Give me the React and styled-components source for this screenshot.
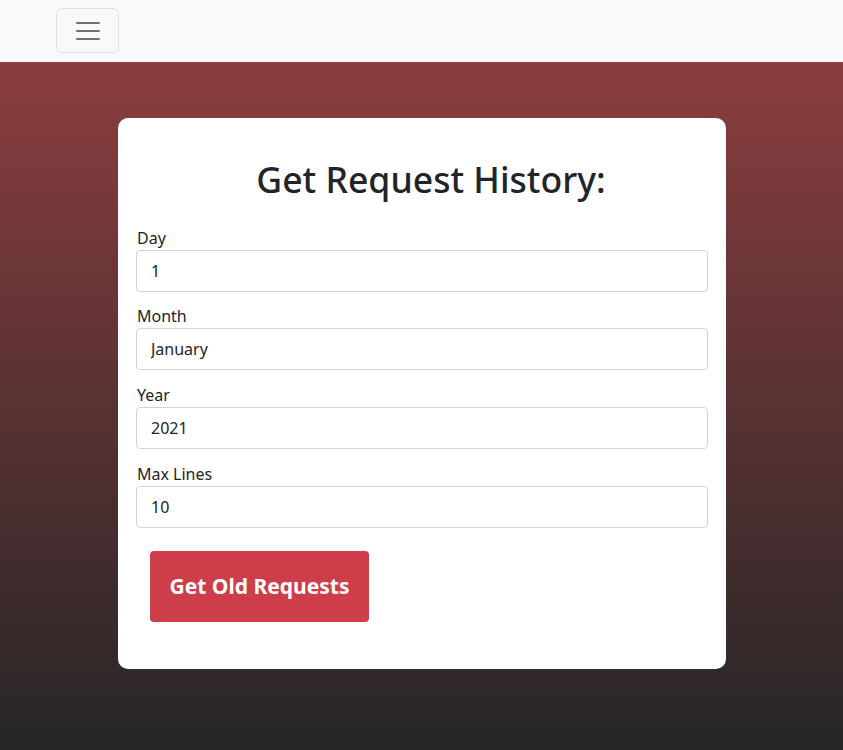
import React from 'react';
import styled, { createGlobalStyle } from 'styled-components';

const GlobalStyle = createGlobalStyle`
  html, body {
    margin: 0;
    padding: 0;
  }
  body {
    font-family: "Noto Sans", "Open Sans", sans-serif;
    color: #212529;
    background: #262626;
  }
  * {
    box-sizing: border-box;
  }
`;

const Page = styled.div`
  min-height: 750px;
  display: flex;
  flex-direction: column;
`;

const Navbar = styled.nav`
  height: 62px;
  background: #f8f9fa;
  padding: 8px 56px;
  display: flex;
  align-items: flex-start;
`;

const Toggler = styled.button`
  width: 63px;
  height: 45px;
  padding: 0;
  background: transparent;
  border: 1px solid rgba(0, 0, 0, 0.1);
  border-radius: 6px;
  display: flex;
  align-items: center;
  justify-content: center;
`;

const Main = styled.main`
  flex: 1;
  background: linear-gradient(180deg, #8b3d3f 0%, #262626 100%);
  padding: 56px 117px 81px 118px;
`;

const Card = styled.div`
  background: #fff;
  border-radius: 10px;
  padding: 40px 18px 47px;
`;

const Title = styled.h1`
  margin: 0 0 25px;
  text-align: center;
  padding-left: 18px;
  font-size: 35.6px;
  font-weight: 500;
  line-height: 1.2;
`;

const Field = styled.div`
  margin-bottom: 12.7px;
`;

const Label = styled.label`
  display: block;
  padding-left: 1px;
  font-size: 16px;
  line-height: 24px;
`;

const Input = styled.input`
  display: block;
  width: 100%;
  height: 42px;
  padding: 6px 14px;
  font-family: inherit;
  font-size: 16px;
  color: #212529;
  border: 1px solid #ced4da;
  border-radius: 4px;
  background: #fff;
`;

const Submit = styled.button`
  margin: 10.3px 0 0 14px;
  width: 219px;
  height: 71px;
  border: none;
  border-radius: 4px;
  background: #cd3e4a;
  color: #fff;
  font-family: inherit;
  font-size: 21px;
  font-weight: 700;
`;

const fields = [
  ['Day', '1'],
  ['Month', 'January'],
  ['Year', '2021'],
  ['Max Lines', '10'],
];

export default function App() {
  return (
    <Page>
      <GlobalStyle />
      <Navbar>
        <Toggler aria-label="Toggle navigation">
          <svg width="30" height="30" viewBox="0 0 30 30">
            <path
              d="M4 7h22M4 15h22M4 23h22"
              stroke="rgba(0,0,0,0.55)"
              strokeWidth="2"
              strokeLinecap="round"
            />
          </svg>
        </Toggler>
      </Navbar>
      <Main>
        <Card>
          <Title>Get Request History:</Title>
          {fields.map(([label, value]) => (
            <Field key={label}>
              <Label>{label}</Label>
              <Input defaultValue={value} />
            </Field>
          ))}
          <Submit>Get Old Requests</Submit>
        </Card>
      </Main>
    </Page>
  );
}
